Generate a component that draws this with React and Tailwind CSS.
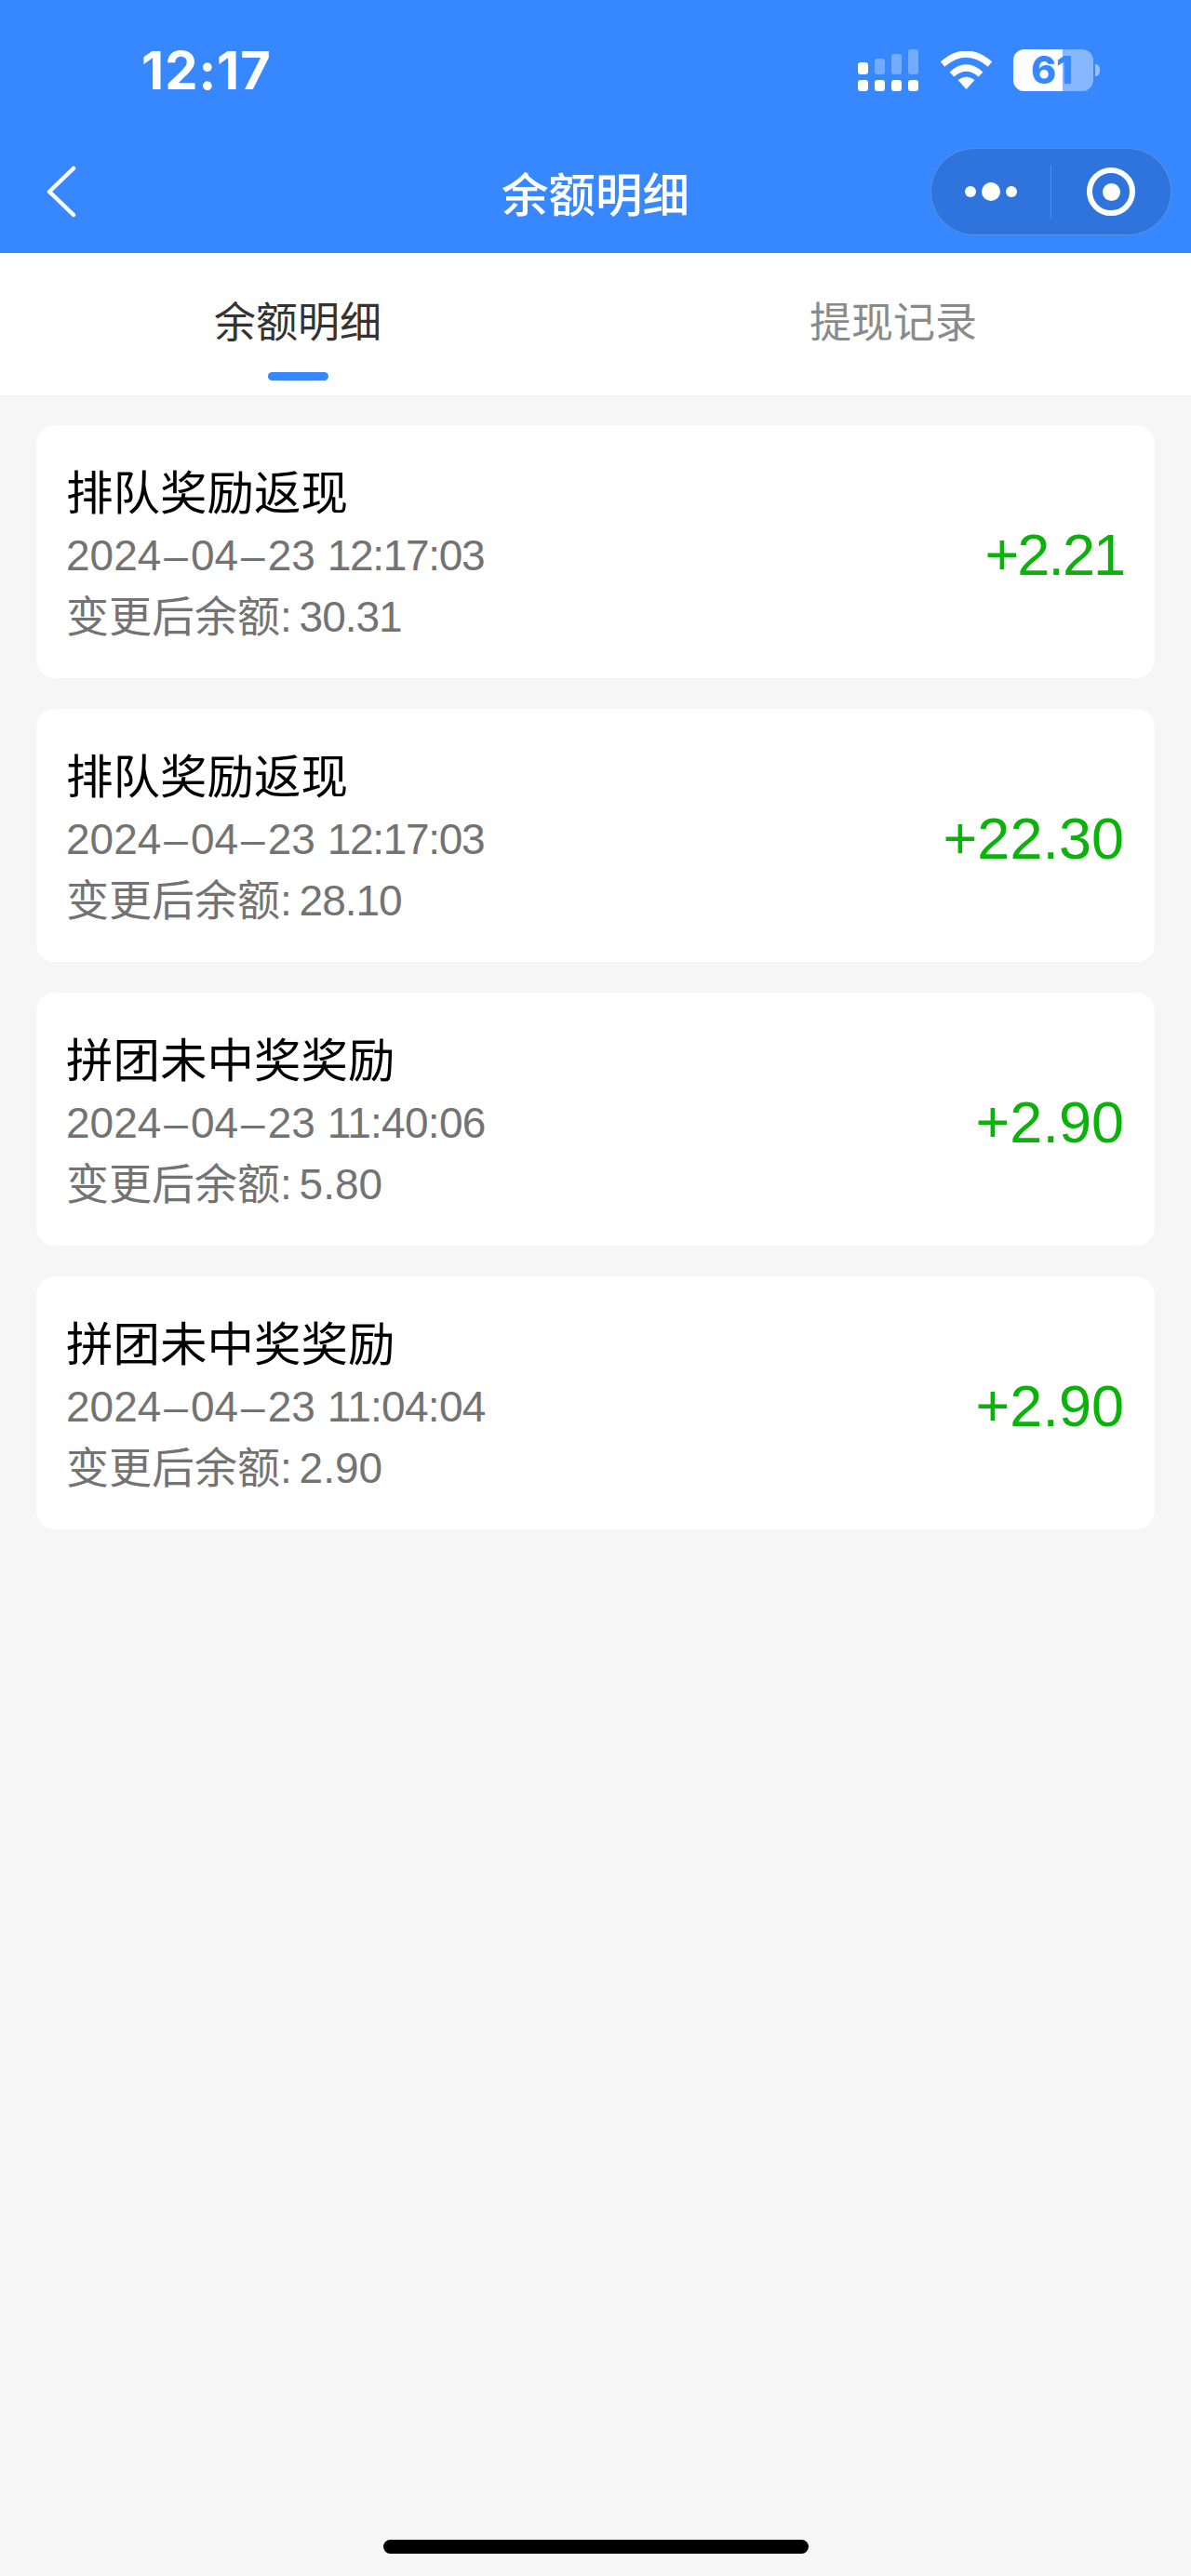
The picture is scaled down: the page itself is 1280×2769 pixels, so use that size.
const records = [
  { title: '排队奖励返现', date: ['2024', '04', '23'], clock: '12:17:03', clockClass: 'tracking-[-1.3px]', balance: '30.31', balanceClass: 'tracking-[-1px]', amount: '+2.21', amountClass: 'tracking-[-2px]' },
  { title: '排队奖励返现', date: ['2024', '04', '23'], clock: '12:17:03', clockClass: 'tracking-[-1.3px]', balance: '28.10', balanceClass: 'tracking-[-1px]', amount: '+22.30', amountClass: '' },
  { title: '拼团未中奖奖励', date: ['2024', '04', '23'], clock: '11:40:06', clockClass: 'tracking-[-0.7px]', balance: '5.80', balanceClass: '', amount: '+2.90', amountClass: '' },
  { title: '拼团未中奖奖励', date: ['2024', '04', '23'], clock: '11:04:04', clockClass: 'tracking-[-0.7px]', balance: '2.90', balanceClass: '', amount: '+2.90', amountClass: '' },
];

function SignalIcon() {
  return (
    <svg width="65" height="45" viewBox="0 0 65 45" fill="white">
      <rect x="0" y="33" width="11" height="12" rx="3" />
      <rect x="18" y="33" width="11" height="12" rx="3" />
      <rect x="36" y="33" width="11" height="12" rx="3" />
      <rect x="54" y="33" width="11" height="12" rx="3" />
      <rect x="0" y="14" width="11" height="13" rx="3" />
      <rect x="18" y="10" width="11" height="17" rx="3" opacity="0.3" />
      <rect x="36" y="5" width="11" height="22" rx="3" opacity="0.3" />
      <rect x="54" y="0" width="11" height="27" rx="3" opacity="0.3" />
    </svg>
  );
}

function WifiIcon() {
  return (
    <svg width="57" height="41" viewBox="0 0 57 41" fill="none" stroke="white" strokeWidth="7">
      <path d="M3 14 Q28.5 -8 54 14" />
      <path d="M13 25 Q28.5 11 44 25" />
      <path d="M19.5 31 Q28.5 24 37.5 31 L28.5 41 Z" fill="white" stroke="none" />
    </svg>
  );
}

function BatteryIcon() {
  return (
    <div className="flex items-center gap-[2px]">
      <div className="relative w-[86px] h-[45px]">
        <div className="h-full rounded-[12px] bg-white/40 overflow-hidden">
          <div className="w-[53px] h-full bg-white" />
        </div>
        <span className="absolute inset-0 flex items-center justify-center pr-[3px] text-[41px] font-extrabold leading-[45px] text-[#3787ff] font-['Inter',sans-serif]">61</span>
      </div>
      <div className="w-[5px] h-[13px] rounded-r-full bg-white/50" />
    </div>
  );
}

function Capsule() {
  return (
    <div className="flex items-center w-[259px] h-[94px] rounded-full bg-[#2f74dc] border border-white/20">
      <div className="flex-1 flex items-center justify-center gap-[6px]">
        <span className="w-[12px] h-[12px] rounded-full bg-white" />
        <span className="w-[20px] h-[20px] rounded-full bg-white" />
        <span className="w-[12px] h-[12px] rounded-full bg-white" />
      </div>
      <div className="w-px h-[57px] bg-white/20" />
      <div className="flex-1 flex items-center justify-center">
        <div className="flex items-center justify-center w-[52px] h-[52px] rounded-full border-[6px] border-white">
          <span className="w-[19px] h-[19px] rounded-full bg-white" />
        </div>
      </div>
    </div>
  );
}

export default function App() {
  return (
    <div className="relative w-[1280px] h-[2769px] bg-[#f6f6f6] font-['Liberation_Sans','Noto_Sans_CJK_SC',sans-serif] overflow-hidden">
      {/* header */}
      <div className="h-[272px] bg-[#3787ff] pt-[49px] text-white">
        <div className="flex items-center h-[53px] pl-[152px] pr-[98px]">
          <span className="text-[56px] font-bold leading-none font-['Inter',sans-serif] tracking-[1px]">12:17</span>
          <div className="ml-auto flex items-center">
            <SignalIcon />
            <div className="ml-[23px] mr-[22px]"><WifiIcon /></div>
            <BatteryIcon />
          </div>
        </div>
        <div className="grid grid-cols-[1fr_auto_1fr] items-center mt-[57px] px-[21px]">
          <svg className="ml-[28px]" width="34" height="56" viewBox="0 0 34 56" fill="none" stroke="white" strokeWidth="4.5" strokeLinecap="round" strokeLinejoin="round">
            <path d="M30 3 L4 28 L30 53" />
          </svg>
          <div className="text-[50.5px] leading-none font-medium font-['Noto_Sans_CJK_SC',sans-serif]">余额明细</div>
          <div className="justify-self-end"><Capsule /></div>
        </div>
      </div>

      {/* tabs */}
      <div className="flex h-[153px] bg-white font-['Noto_Sans_CJK_SC',sans-serif]">
        <div className="flex-1 flex flex-col items-center pt-[42px]">
          <div className="text-[45px] leading-[60px] text-[#333333]">余额明细</div>
          <div className="mt-[26px] w-[65px] h-[9px] rounded-full bg-[#3787ff]" />
        </div>
        <div className="flex-1 flex flex-col items-center pt-[42px]">
          <div className="text-[45px] leading-[60px] text-[#8a8a8a]">提现记录</div>
        </div>
      </div>

      {/* records */}
      <div className="flex flex-col gap-[33px] mt-[32px] mx-[39px]">
        {records.map((r, i) => (
          <div key={i} className="flex items-center justify-between h-[272px] pl-[32px] pr-[33px] bg-white rounded-[20px]">
            <div className="flex flex-col pt-[4px]">
              <div className="text-[50.5px] leading-[64px] text-black font-['Noto_Sans_CJK_SC',sans-serif]">{r.title}</div>
              <div className="mt-[6px] text-[46px] leading-[66px] text-[#737373]">
                {r.date[0]}<span className="mx-[3px]">–</span>{r.date[1]}<span className="mx-[3px]">–</span>{r.date[2]} <span className={r.clockClass}>{r.clock}</span>
              </div>
              <div className="text-[46px] leading-[66px] text-[#737373]">
                变更后余额: <span className={`-ml-[5px] ${r.balanceClass}`}>{r.balance}</span>
              </div>
            </div>
            <div className={`pt-[6px] text-[63px] leading-none text-[#0ab20a] ${r.amountClass}`}>{r.amount}</div>
          </div>
        ))}
      </div>

      {/* home indicator */}
      <div className="absolute left-[412px] top-[2730px] w-[457px] h-[15px] rounded-full bg-black" />
    </div>
  );
}
